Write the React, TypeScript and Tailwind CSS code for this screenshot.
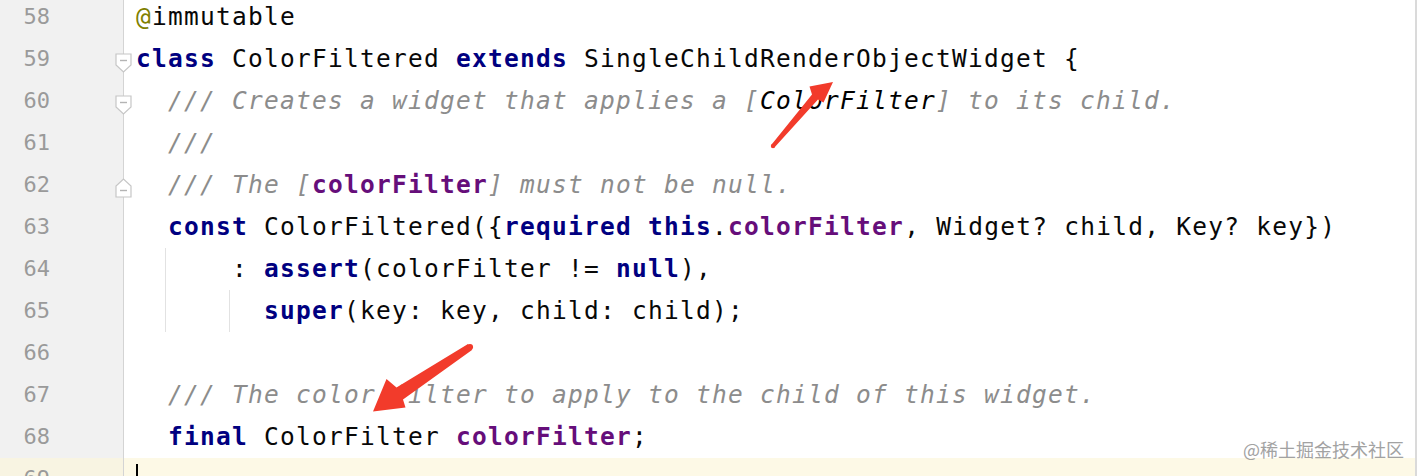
const KW = "font-bold text-[#000080]";
const FIELD = "font-bold text-[#660e7a]";
const CMT = "italic text-[#8c8c8c]";

type Seg = [string, string?];

type Line = {
  n: number;
  segs: Seg[];
  fold?: "down" | "up";
  guides?: number[];
  current?: boolean;
};

const lines: Line[] = [
  { n: 58, segs: [["@", "text-[#808000]"], ["immutable"]] },
  {
    n: 59,
    fold: "down",
    segs: [["class", KW], [" ColorFiltered "], ["extends", KW], [" SingleChildRenderObjectWidget {"]],
  },
  {
    n: 60,
    fold: "down",
    segs: [
      ["  "],
      ["/// Creates a widget that applies a [", CMT],
      ["ColorFilter", "italic text-black"],
      ["] to its child.", CMT],
    ],
  },
  { n: 61, segs: [["  "], ["///", CMT]] },
  {
    n: 62,
    fold: "up",
    segs: [["  "], ["/// The [", CMT], ["colorFilter", FIELD], ["] must not be null.", CMT]],
  },
  {
    n: 63,
    segs: [
      ["  "],
      ["const", KW],
      [" ColorFiltered({"],
      ["required", KW],
      [" "],
      ["this", KW],
      ["."],
      ["colorFilter", FIELD],
      [", Widget? child, Key? key})"],
    ],
  },
  {
    n: 64,
    guides: [41],
    segs: [["      : "], ["assert", KW], ["(colorFilter != "], ["null", KW], ["),"]],
  },
  {
    n: 65,
    guides: [41, 105],
    segs: [["        "], ["super", KW], ["(key: key, child: child);"]],
  },
  { n: 66, segs: [] },
  { n: 67, segs: [["  "], ["/// The color filter to apply to the child of this widget.", CMT]] },
  { n: 68, segs: [["  "], ["final", KW], [" ColorFilter "], ["colorFilter", FIELD], [";"]] },
  { n: 69, segs: [], current: true },
];

function FoldMarker({ dir }: { dir: "down" | "up" }) {
  if (dir === "down") {
    return (
      <svg width="17" height="20" viewBox="0 0 17 20" className="absolute left-[115px] top-[15px]">
        <path d="M1 1H16V12L8.5 19L1 12Z" fill="#ffffff" stroke="#c6c6c6" strokeWidth="1.2" />
        <path d="M5 7.5H12" stroke="#b4b4b4" strokeWidth="1.4" />
      </svg>
    );
  }
  return (
    <svg width="17" height="20" viewBox="0 0 17 20" className="absolute left-[115px] top-[14px]">
      <path d="M1 19H16V8L8.5 1L1 8Z" fill="#ffffff" stroke="#c6c6c6" strokeWidth="1.2" />
      <path d="M5 12.5H12" stroke="#b4b4b4" strokeWidth="1.4" />
    </svg>
  );
}

function Row({ line }: { line: Line }) {
  const bg = line.current ? "bg-[#fdf9e6]" : "bg-white";
  return (
    <div className="relative flex h-[42px] shrink-0">
      <div
        className={`w-[123px] shrink-0 pr-[73px] text-right text-[22px] leading-[42px] text-[#9a9a9a] font-['DejaVu_Sans_Mono',monospace] ${
          line.current ? "bg-[#f8f4e2]" : "bg-[#f1f1f1]"
        }`}
      >
        {line.n}
      </div>
      <div className="w-px shrink-0 bg-[#d4d4d4]" />
      <div
        className={`relative flex-1 flex items-center pl-[12px] whitespace-pre text-[24.5px] leading-[42px] tracking-[1.25px] text-[#080808] font-['DejaVu_Sans_Mono',monospace] ${bg}`}
      >
        {line.guides?.map((g) => (
          <div key={g} className="absolute top-0 bottom-0 w-px bg-[#e2e2e2]" style={{ left: g }} />
        ))}
        {line.segs.map(([t, c], i) => (
          <span key={i} className={c}>
            {t}
          </span>
        ))}
        {line.current && <span className="mt-[6px] h-[36px] w-[2px] bg-black" />}
      </div>
      {line.fold && <FoldMarker dir={line.fold} />}
    </div>
  );
}

export default function App() {
  return (
    <div className="relative flex w-[1420px] h-[476px] overflow-hidden bg-white">
      <div className="flex-1 flex flex-col -mt-[4px]">
        {lines.map((l) => (
          <Row key={l.n} line={l} />
        ))}
      </div>
      <div className="w-[2px] shrink-0 bg-[#dadada]" />
      <div className="w-[3px] shrink-0 bg-white" />

      <svg
        className="absolute inset-0 pointer-events-none"
        width="1420"
        height="476"
        viewBox="0 0 1420 476"
      >
        <polygon
          points="771.6,144.4 812,94.4 809.5,86.5 833,82 823.5,102.5 818,99.6 774.4,147.6"
          fill="#f23b2b"
        />
        <circle cx="773" cy="146" r="2.2" fill="#f23b2b" />
        <polygon
          points="468,344 396.5,387.5 386.5,379 373,411.5 405.5,407.5 403,399.5 472,350"
          fill="#f23b2b"
        />
        <circle cx="470" cy="347" r="3.1" fill="#f23b2b" />
      </svg>

      <div className="absolute left-[1243px] top-[440px] text-[18px] leading-none text-[#a2a2a2] font-['Noto_Sans_CJK_SC',sans-serif]">
        @稀土掘金技术社区
      </div>
    </div>
  );
}
